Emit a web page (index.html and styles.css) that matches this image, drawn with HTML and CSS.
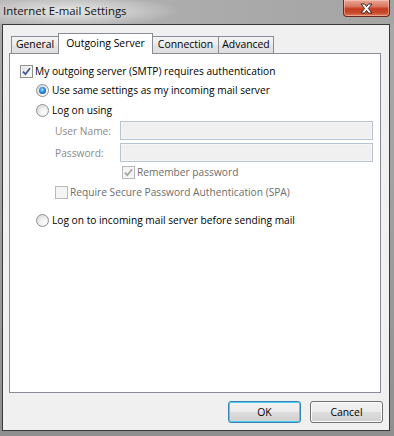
FILE: index.html
```html
<!DOCTYPE html>
<html>
<head>
<meta charset="utf-8">
<link rel="stylesheet" href="styles.css">
</head>
<body>
<div class="window">
  <div class="titlebar">
    <span class="title">Internet E-mail Settings</span>
    <div class="close">
      <svg width="15" height="11" viewBox="0 0 15 11">
        <path d="M2 1 L5.5 1 L7.5 3.6 L9.5 1 L13 1 L9.3 5.5 L13 10 L9.5 10 L7.5 7.4 L5.5 10 L2 10 L5.7 5.5 Z" fill="#fff" stroke="#3a2a2a" stroke-width="1" stroke-linejoin="round"/>
      </svg>
    </div>
  </div>
  <div class="frame">
    <div class="client">
      <div class="tabs">
        <div class="tab t-general">General</div>
        <div class="tab t-selected">Outgoing Server</div>
        <div class="tab t-connection">Connection</div>
        <div class="tab t-advanced">Advanced</div>
      </div>
      <div class="panel">
        <div class="row r-auth">
          <span class="cb"><svg width="9" height="9" viewBox="0 0 9 9"><path d="M1 4.6 L3.4 7.2 L8 1.2" fill="none" stroke="#3d5596" stroke-width="1.7"/></svg></span>
          <span class="lbl">My outgoing server (SMTP) requires authentication</span>
        </div>
        <div class="row r-same">
          <span class="rb"><span class="dot"></span></span>
          <span class="lbl">Use same settings as my incoming mail server</span>
        </div>
        <div class="row r-logon">
          <span class="rb"></span>
          <span class="lbl">Log on using</span>
        </div>
        <div class="field r-user">
          <span class="flabel">User Name:</span>
          <span class="input"></span>
        </div>
        <div class="field r-pass">
          <span class="flabel">Password:</span>
          <span class="input"></span>
        </div>
        <div class="row r-remember">
          <span class="cb disabled"><svg width="9" height="9" viewBox="0 0 9 9"><path d="M1 4.6 L3.4 7.2 L8 1.2" fill="none" stroke="#a4a4a4" stroke-width="1.7"/></svg></span>
          <span class="lbl dis">Remember password</span>
        </div>
        <div class="row r-spa">
          <span class="cb disabled"></span>
          <span class="lbl dis">Require Secure Password Authentication (SPA)</span>
        </div>
        <div class="row r-before">
          <span class="rb"></span>
          <span class="lbl">Log on to incoming mail server before sending mail</span>
        </div>
      </div>
      <div class="buttons">
        <div class="btn default">OK</div>
        <div class="btn">Cancel</div>
      </div>
    </div>
  </div>
</div>
</body>
</html>
```
FILE: styles.css
```css
html, body {
  margin: 0;
  padding: 0;
}
body {
  width: 394px;
  height: 436px;
  overflow: hidden;
  font-family: "Open Sans", "Noto Sans", sans-serif;
  font-size: 10.2px;
  color: #000;
}
.window {
  width: 394px;
  height: 436px;
  display: flex;
  flex-direction: column;
  background: linear-gradient(180deg, #a9a9a9 0%, #a2a2a2 40%, #8f8f8f 100%);
}
.titlebar {
  height: 24px;
  flex: none;
  display: flex;
  justify-content: space-between;
  align-items: flex-start;
  background:
    radial-gradient(ellipse 110px 16px at 70px 11px, rgba(235,235,235,0.95) 0%, rgba(220,220,220,0.6) 55%, rgba(200,200,200,0) 100%),
    linear-gradient(90deg, #b3b3b3 0%, #aaaaaa 60%, #a4a4a4 100%);
}
.title {
  font-family: "Open Sans", "Noto Sans", sans-serif;
  font-size: 11.4px;
  line-height: 16px;
  padding: 3px 0 0 3px;
  color: #111;
}
.close {
  width: 47px;
  height: 17px;
  margin-right: 4px;
  box-sizing: border-box;
  border: 1px solid #6b2a1c;
  border-top: none;
  border-radius: 0 0 4px 4px;
  background: linear-gradient(180deg, #e9a797 0%, #d9775f 40%, #c53c1f 55%, #c94a2c 80%, #e07a5a 100%);
  box-shadow: inset 0 0 0 1px rgba(255,220,210,0.45);
  display: flex;
  align-items: center;
  justify-content: center;
}
.frame {
  flex: 1;
  padding: 0 4px 5px 2px;
  display: flex;
}
.client {
  flex: 1;
  border: 1px solid #3a3a3a;
  background: #f0f0f0;
  padding: 8px 6px 7px 6px;
  display: flex;
  flex-direction: column;
}
.tabs {
  display: flex;
  align-items: flex-end;
  height: 20px;
  padding-left: 2px;
  position: relative;
  z-index: 1;
}
.tab {
  height: 17px;
  box-sizing: border-box;
  border-top: 1px solid #898c95;
  background: linear-gradient(180deg, #f4f4f4 0%, #ececec 50%, #e4e4e4 51%, #dedede 100%);
  font-size: 10.4px;
  line-height: 15px;
  text-align: center;
  color: #000;
}
.t-general {
  width: 47px;
  border-left: 1px solid #898c95;
}
.t-selected {
  width: 95px;
  height: 21px;
  margin-bottom: -1px;
  border: 1px solid #898c95;
  border-bottom: none;
  background: #fff;
  line-height: 19px;
  padding-bottom: 1px;
}
.t-connection {
  width: 65px;
}
.t-advanced {
  width: 56px;
  border-left: 1px solid #898c95;
  border-right: 1px solid #898c95;
}
.panel {
  height: 340px;
  box-sizing: border-box;
  margin-right: 2px;
  border: 1px solid #898c95;
  background: #fff;
  display: flex;
  flex-direction: column;
}
.row {
  display: flex;
  align-items: center;
  height: 13px;
  flex: none;
}
.lbl {
  white-space: nowrap;
  line-height: 13px;
}
.lbl.dis {
  color: #6d6d6d;
}
.r-auth { margin-top: 11px; padding-left: 10px; gap: 2px; }
.r-same { margin-top: 6px; padding-left: 26px; gap: 3px; }
.r-logon { margin-top: 7px; padding-left: 26px; gap: 3px; }
.r-remember { margin-top: 4px; padding-left: 112px; gap: 2px; }
.r-spa { margin-top: 7px; padding-left: 45px; gap: 2px; }
.r-before { margin-top: 15px; padding-left: 26px; gap: 3px; }
.field {
  display: flex;
  align-items: center;
  height: 19px;
  flex: none;
  padding-left: 45px;
}
.r-user { margin-top: 4px; }
.r-pass { margin-top: 3px; }
.flabel {
  width: 65px;
  color: #8a8a8a;
  white-space: nowrap;
}
.input {
  width: 253px;
  height: 19px;
  box-sizing: border-box;
  border: 1px solid #b9c3cd;
  background: #f0f0f0;
  box-shadow: inset 0 0 0 1px #f5f5f5;
}
.cb {
  width: 13px;
  height: 13px;
  box-sizing: border-box;
  flex: none;
  border: 1px solid #8e8f8f;
  background: linear-gradient(135deg, #dcdcdc 0%, #f2f2f2 60%, #ffffff 100%);
  box-shadow: inset 0 0 0 1px #f4f4f4;
  display: flex;
  align-items: center;
  justify-content: center;
}
.cb.disabled {
  border-color: #b9b9b9;
  background: #f4f4f4;
}
.rb {
  width: 13px;
  height: 13px;
  box-sizing: border-box;
  flex: none;
  border-radius: 50%;
  border: 1px solid #8f8f8f;
  background: radial-gradient(circle at 65% 70%, #ffffff 0%, #f0f0f0 40%, #cfcfcf 100%);
  display: flex;
  align-items: center;
  justify-content: center;
}
.dot {
  width: 7px;
  height: 7px;
  border-radius: 50%;
  background: radial-gradient(circle at 45% 40%, #b6e8ff 0%, #3a9de6 35%, #12539d 75%, #0b3a75 100%);
}
.buttons {
  display: flex;
  justify-content: flex-end;
  gap: 9px;
  margin-top: 8px;
  height: 22px;
}
.btn {
  width: 73px;
  height: 22px;
  box-sizing: border-box;
  border: 1px solid #707070;
  border-radius: 3px;
  background: linear-gradient(180deg, #f2f2f2 0%, #ebebeb 48%, #dddddd 52%, #cfcfcf 100%);
  box-shadow: inset 0 0 0 1px #fcfcfc;
  font-size: 10.4px;
  line-height: 20px;
  text-align: center;
  color: #000;
}
.btn.default {
  border-color: #3c7fb1;
  box-shadow: inset 0 0 0 1px #48d1f5;
}
```
